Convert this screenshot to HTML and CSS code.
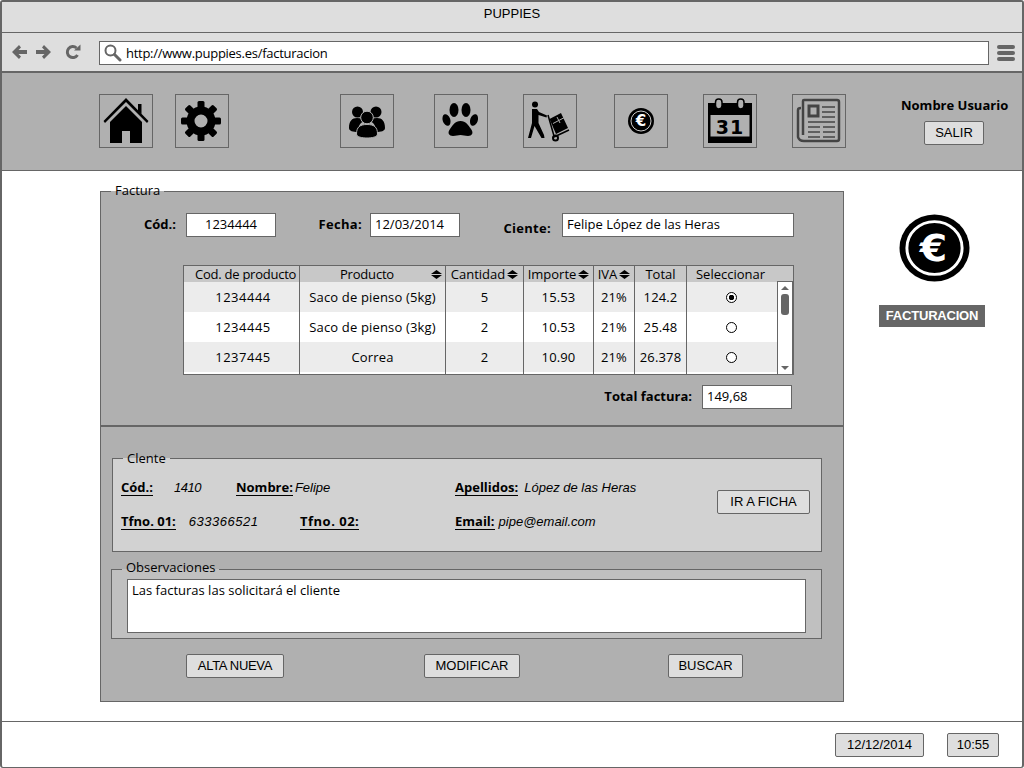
FILE: index.html
```html
<!DOCTYPE html>
<html>
<head>
    <title>Puppies - Facturacion</title>
    <link rel="stylesheet" href="styles.css">
</head>
<body>

<div class="window">
    <div class="titlebar">PUPPIES</div>

    <div class="navbar">
        <svg class="nav-icon nav-back" width="16" height="16" viewBox="0 0 16 16"><path d="M8 1 L1 8 L8 15 L10 12.5 L7.5 10 H16 V6 H7.5 L10 3.5 Z" fill="#666"/></svg>
        <svg class="nav-icon nav-forward" width="16" height="16" viewBox="0 0 16 16"><path d="M8 1 L15 8 L8 15 L6 12.5 L8.500 10 H0 V6 H8.500 L6 3.500 Z" fill="#666"/></svg>
        <svg class="nav-icon nav-reload" width="16" height="16" viewBox="0 0 16 16"><path d="M12.500 11 A5.500 5.500 0 1 1 11.500 4" fill="none" stroke="#666" stroke-width="3"/><path d="M9 6.500 H15.500 V0.500 Z" fill="#666"/></svg>
        <div class="urlbar">
            <svg class="search-icon" width="18" height="18" viewBox="0 0 18 18"><circle cx="6.500" cy="6.500" r="5" fill="none" stroke="#666" stroke-width="2"/><path d="M10.500 10.500 L16 16" stroke="#666" stroke-width="3" stroke-linecap="round"/></svg>
            http://www.puppies.es/facturacion
        </div>
        <div class="burger"><span></span><span></span><span></span></div>
    </div>

    <div class="header">
        <div class="icon-box box-home">
            <svg width="52" height="52" viewBox="1 1 52 52">
                <path d="M27 4 L49.500 27 L48 29 L27 8 L6 29 L4.500 27 Z"/>
                <path d="M39 10 H42.500 V20 L39 17 Z"/>
                <path d="M27 12 L43 28 V49 H31 V37 H23 V49 H11 V28 Z"/>
            </svg>
        </div>
        <div class="icon-box box-gear">
            <svg width="52" height="52" viewBox="1 1 52 52">
                <circle cx="26" cy="27" r="10.500" fill="none" stroke="#000" stroke-width="8"/>
                <g>
                    <rect x="22.500" y="7" width="7" height="7" rx="1.500"/>
                    <rect x="22.500" y="7" width="7" height="7" rx="1.500" transform="rotate(45 26 27)"/>
                    <rect x="22.500" y="7" width="7" height="7" rx="1.500" transform="rotate(90 26 27)"/>
                    <rect x="22.500" y="7" width="7" height="7" rx="1.500" transform="rotate(135 26 27)"/>
                    <rect x="22.500" y="7" width="7" height="7" rx="1.500" transform="rotate(180 26 27)"/>
                    <rect x="22.500" y="7" width="7" height="7" rx="1.500" transform="rotate(225 26 27)"/>
                    <rect x="22.500" y="7" width="7" height="7" rx="1.500" transform="rotate(270 26 27)"/>
                    <rect x="22.500" y="7" width="7" height="7" rx="1.500" transform="rotate(315 26 27)"/>
                </g>
            </svg>
        </div>
        <div class="icon-box box-group">
            <svg width="52" height="52" viewBox="1 1 52 52">
                <circle cx="17.500" cy="18" r="5.500"/>
                <circle cx="36" cy="18" r="5.500"/>
                <path d="M9 34 C9 27 12 24 17 24 C21 24 23 25 24 27 C20 29 18 32 18 38 C13 38 9 37 9 34 Z"/>
                <path d="M45 34 C45 27 42 24 37 24 C33 24 31 25 30 27 C34 29 36 32 36 38 C41 38 45 37 45 34 Z"/>
                <circle cx="27" cy="23.500" r="6.300" stroke="#b0b0b0" stroke-width="1"/>
                <path d="M16.500 40 C16.500 33 20 30.500 27 30.500 C34 30.500 37.500 33 37.500 40 C37.500 43 32 44 27 44 C22 44 16.500 43 16.500 40 Z" stroke="#b0b0b0" stroke-width="1"/>
            </svg>
        </div>
        <div class="icon-box box-paw">
            <svg width="52" height="52" viewBox="1 1 52 52">
                <ellipse cx="20" cy="16" rx="4.500" ry="7"/>
                <ellipse cx="32" cy="16" rx="4.500" ry="7"/>
                <ellipse cx="12.500" cy="26" rx="3.800" ry="6" transform="rotate(-18 12.500 26)"/>
                <ellipse cx="40" cy="26" rx="3.800" ry="6" transform="rotate(18 40 26)"/>
                <path d="M26.500 27 C32 27 34 31 37 35 C40 39 38 42 34 42 C31 42 29 41 26.500 41 C24 41 22 42 19 42 C15 42 13 39 16 35 C19 31 21 27 26.500 27 Z"/>
            </svg>
        </div>
        <div class="icon-box box-carrier">
            <svg width="52" height="52" viewBox="1 1 52 52">
                <circle cx="12" cy="10.500" r="3"/>
                <path d="M9 15 H14 L16 18 L24 21.500 L23.500 23.500 L15.500 21 V29 L21 41 L21.500 44 H18.500 L11.500 32 L8 44 H5 L9 29 Z"/>
                <path d="M25 21 L31 42" stroke="#000" stroke-width="1.500"/>
                <path d="M31 43 L46 36" stroke="#000" stroke-width="1.500"/>
                <circle cx="32.500" cy="44" r="2.500" fill="none" stroke="#000" stroke-width="2"/>
                <path d="M26.500 25 L38 19 L45 34 L33 40 Z"/>
                <path d="M30 29.500 L41.500 23.500 M34 23 L37 29" stroke="#b0b0b0" stroke-width="1"/>
            </svg>
        </div>
        <div class="icon-box box-coin">
            <svg width="52" height="52" viewBox="1 1 52 52">
                <circle cx="27" cy="27" r="13"/>
                <circle cx="27" cy="27" r="10" fill="none" stroke="#ccc" stroke-width="1"/>
                <text x="27" y="32" text-anchor="middle" class="euro-small">€</text>
            </svg>
        </div>
        <div class="icon-box box-calendar">
            <svg width="52" height="52" viewBox="1 1 52 52">
                <path d="M5 9 H49 V49 H5 Z"/>
                <rect x="7.500" y="21" width="39" height="21.500" fill="#b0b0b0"/>
                <rect x="12.500" y="5" width="6.500" height="10" rx="3.200" fill="#b0b0b0" stroke="#000" stroke-width="1.500"/>
                <rect x="34.500" y="5" width="6.500" height="10" rx="3.200" fill="#b0b0b0" stroke="#000" stroke-width="1.500"/>
                <text x="27" y="39.500" text-anchor="middle" class="cal-day">31</text>
            </svg>
        </div>
        <div class="icon-box box-news">
            <svg width="52" height="52" viewBox="1 1 52 52" fill="none" stroke="#444">
                <path d="M11 7 Q11 6 12 6 H45 Q47 6 47 8 V45 Q47 47 45 47 H12 Q7 47 6 43 V16 Q6 14 9 14" stroke-width="2.500"/>
                <path d="M11 7 V41" stroke-width="2.500"/>
                <rect x="17" y="12" width="9" height="10" stroke-width="3"/>
                <path d="M30 13 H43 M30 18 H43 M30 23 H43 M16 28 H43 M16 33 H28 M31 33 H43 M16 38 H28 M31 38 H43 M16 43 H28 M31 43 H43" stroke-width="1.300"/>
            </svg>
        </div>
        <div class="user">
            <div class="user-name">Nombre Usuario</div>
            <div class="btn btn-salir">SALIR</div>
        </div>
    </div>

    <div class="main">
        <fieldset class="factura">
            <legend>Factura</legend>

            <div class="factura-data">
                <div class="top-row">
                    <label class="lbl lbl-cod">Cód.:</label>
                    <div class="field field-cod">1234444</div>
                    <label class="lbl lbl-fecha">Fecha:</label>
                    <div class="field field-fecha">12/03/2014</div>
                    <label class="lbl lbl-cliente">Ciente:</label>
                    <div class="field field-cliente">Felipe López de las Heras</div>
                </div>

                <div class="table-wrap">
                    <table class="lines">
                        <thead>
                            <tr>
                                <th class="col-cod">Cod. de producto</th>
                                <th class="col-prod th-producto">Producto<svg class="sort sort-far" width="11" height="9" viewBox="0 0 10 9" preserveAspectRatio="none"><path d="M5 0 L10 4 H0 Z M0 5 H10 L5 9 Z"/></svg></th>
                                <th class="col-cant">Cantidad<svg class="sort" width="11" height="9" viewBox="0 0 10 9" preserveAspectRatio="none"><path d="M5 0 L10 4 H0 Z M0 5 H10 L5 9 Z"/></svg></th>
                                <th class="col-imp">Importe<svg class="sort" width="11" height="9" viewBox="0 0 10 9" preserveAspectRatio="none"><path d="M5 0 L10 4 H0 Z M0 5 H10 L5 9 Z"/></svg></th>
                                <th class="col-iva">IVA<svg class="sort" width="11" height="9" viewBox="0 0 10 9" preserveAspectRatio="none"><path d="M5 0 L10 4 H0 Z M0 5 H10 L5 9 Z"/></svg></th>
                                <th class="col-total">Total</th>
                                <th class="col-sel">Seleccionar</th>
                            </tr>
                        </thead>
                        <tbody>
                            <tr class="odd">
                                <td class="cell-code">1234444</td>
                                <td>Saco de pienso (5kg)</td>
                                <td>5</td>
                                <td>15.53</td>
                                <td>21%</td>
                                <td>124.2</td>
                                <td class="cell-radio"><span class="radio radio-on"></span></td>
                            </tr>
                            <tr>
                                <td class="cell-code">1234445</td>
                                <td>Saco de pienso (3kg)</td>
                                <td>2</td>
                                <td>10.53</td>
                                <td>21%</td>
                                <td>25.48</td>
                                <td class="cell-radio"><span class="radio"></span></td>
                            </tr>
                            <tr class="odd">
                                <td class="cell-code">1237445</td>
                                <td>Correa</td>
                                <td>2</td>
                                <td>10.90</td>
                                <td>21%</td>
                                <td>26.378</td>
                                <td class="cell-radio"><span class="radio"></span></td>
                            </tr>
                            <tr class="filler">
                                <td></td><td></td><td></td><td></td><td></td><td></td><td></td>
                            </tr>
                        </tbody>
                    </table>
                    <div class="scrollbar">
                        <span class="arrow-up"></span>
                        <span class="thumb"></span>
                        <span class="arrow-down"></span>
                    </div>
                </div>

                <div class="total-row">
                    <label class="lbl">Total factura:</label>
                    <div class="field field-total">149,68</div>
                </div>
            </div>

            <fieldset class="cliente">
                <legend>Clente</legend>
                <div class="cliente-body">
                    <div class="cliente-rows">
                        <div class="data-row">
                            <div class="dato dato-cod"><b>Cód.:</b><i class="val-cod">1410</i></div>
                            <div class="dato dato-nombre"><b>Nombre:</b><i>Felipe</i></div>
                            <div class="dato dato-apellidos"><b>Apellidos:</b><i>López de las Heras</i></div>
                        </div>
                        <div class="data-row">
                            <div class="dato dato-tel1"><b>Tfno. 01:</b><i class="val-tel">633366521</i></div>
                            <div class="dato dato-tel2"><b>Tfno. 02:</b></div>
                            <div class="dato"><b>Email:</b><i>pipe@email.com</i></div>
                        </div>
                    </div>
                    <div class="btn btn-ficha">IR A FICHA</div>
                </div>
            </fieldset>

            <fieldset class="observaciones">
                <legend>Observaciones</legend>
                <div class="obs-text">Las facturas las solicitará el cliente</div>
            </fieldset>

            <div class="actions">
                <div class="btn btn-alta">ALTA NUEVA</div>
                <div class="btn btn-modificar">MODIFICAR</div>
                <div class="btn btn-buscar">BUSCAR</div>
            </div>
        </fieldset>

        <div class="section">
            <svg class="section-icon" width="71" height="68" viewBox="0 0 72 72" preserveAspectRatio="none">
                <circle cx="36" cy="36" r="35.500"/>
                <circle cx="36" cy="36" r="28" fill="none" stroke="#fff" stroke-width="3"/>
                <text x="35" y="50" text-anchor="middle" class="euro-big">€</text>
            </svg>
            <div class="section-name">FACTURACION</div>
        </div>
    </div>

    <div class="footer">
        <div class="btn btn-date">12/12/2014</div>
        <div class="btn btn-time">10:55</div>
    </div>
</div>

</body>
</html>
```

FILE: styles.css
```css
/* Wireframe colours: #666 lines, #b0b0b0 panels, #dedede bars */
* {
    box-sizing: border-box;
}
body {
    margin: 0;
    background: #fff;
    font-family: "Open Sans", "Liberation Sans", sans-serif;
    font-size: 13px;
    color: #000;
}
.window {
    width: 1024px;
    height: 768px;
    display: flex;
    flex-direction: column;
    border: 2px solid #666;
    border-bottom-width: 1px;
    border-radius: 3px;
    overflow: hidden;
}
.titlebar {
    height: 31px;
    flex: none;
    background: #dedede;
    border-bottom: 1px solid #666;
    padding-top: 4px;
    text-align: center;
    font-family: "Liberation Sans", sans-serif;
    line-height: 15px;
}
.navbar {
    height: 40px;
    flex: none;
    display: flex;
    align-items: center;
    background: #dedede;
    border-bottom: 2px solid #666;
    padding-top: 2px;
}
.nav-icon {
    flex: none;
    margin-bottom: 2px;
}
.nav-back {
    margin-left: 9px;
}
.nav-forward {
    margin-left: 9px;
}
.nav-reload {
    margin-left: 13px;
}
.urlbar {
    width: 890px;
    height: 24px;
    margin-left: 18px;
    display: flex;
    align-items: center;
    gap: 4px;
    padding-left: 4px;
    background: #fff;
    border: 1px solid #666;
    letter-spacing: -0.27px;
}
.search-icon {
    flex: none;
}
.burger {
    margin-left: 8px;
    width: 18px;
    display: flex;
    flex-direction: column;
    gap: 2px;
}
.burger span {
    height: 4px;
    background: #666;
    border-radius: 2px;
}
.header {
    height: 98px;
    flex: none;
    display: flex;
    align-items: flex-start;
    padding-top: 21px;
    background: #b0b0b0;
    border-bottom: 1px solid #666;
}
.icon-box {
    width: 54px;
    height: 54px;
    flex: none;
    border: 1px solid #666;
}
.icon-box svg {
    display: block;
}
.box-home { margin-left: 97px; }
.box-gear { margin-left: 22px; }
.box-group { margin-left: 111px; }
.box-paw { margin-left: 40px; }
.box-carrier { margin-left: 35px; }
.box-coin { margin-left: 37px; }
.box-calendar { margin-left: 35px; }
.box-news { margin-left: 35px; }
.euro-small {
    font-family: "DejaVu Sans", sans-serif;
    font-size: 15px;
    font-weight: bold;
    fill: #fff;
}
.euro-big {
    font-family: "DejaVu Sans", sans-serif;
    font-size: 40px;
    font-weight: bold;
    fill: #fff;
}
.cal-day {
    font-family: "DejaVu Sans", sans-serif;
    font-size: 19px;
    font-weight: bold;
    letter-spacing: 1px;
}
.user {
    margin-left: 55px;
    margin-top: 3px;
    width: 107px;
    text-align: center;
}
.user-name {
    font-weight: bold;
    line-height: 16px;
    white-space: nowrap;
}
.btn {
    height: 24px;
    display: flex;
    align-items: center;
    justify-content: center;
    flex: none;
    padding-bottom: 1px;
    background: #dedede;
    border: 1px solid #666;
    border-radius: 2px;
    font-family: "Liberation Sans", sans-serif;
    white-space: nowrap;
}
.btn-salir {
    width: 60px;
    margin: 8px 0 0 23px;
}
.main {
    flex: 1;
    display: flex;
    align-items: flex-start;
    padding: 11px 0 0 98px;
}
fieldset {
    margin: 0;
    padding: 0;
    min-width: 0;
    border: 1px solid #666;
}
legend {
    padding: 0 4px;
    line-height: 16px;
}
.factura {
    width: 744px;
    height: 520px;
    background: #b0b0b0;
}
.factura > legend {
    margin-left: 10px;
    padding-bottom: 2px;
}
.factura-data {
    height: 227px;
    padding-top: 13px;
    border-bottom: 2px solid #666;
}
.top-row {
    display: flex;
    align-items: center;
}
.lbl {
    padding-bottom: 2px;
    font-weight: bold;
    text-align: right;
    white-space: nowrap;
}
.lbl-cod {
    width: 75px;
    margin-right: 10px;
}
.lbl-fecha {
    width: 86px;
    margin-right: 8px;
    letter-spacing: 0.3px;
}
.lbl-cliente {
    width: 91px;
    margin-right: 11px;
    padding: 6px 0 0;
    letter-spacing: 0.3px;
}
.field {
    height: 24px;
    flex: none;
    display: flex;
    align-items: center;
    padding: 0 0 2px 4px;
    background: #fff;
    border: 1px solid #666;
}
.field-cod {
    width: 90px;
    justify-content: center;
    padding-left: 0;
}
.field-fecha {
    width: 90px;
}
.field-cliente {
    width: 232px;
}
.table-wrap {
    position: relative;
    width: 610px;
    margin: 28px 0 0 82px;
}
.lines {
    width: 610px;
    table-layout: fixed;
    border-collapse: collapse;
    border: 1px solid #666;
}
.lines th {
    height: 16px;
    padding: 0;
    background: #c8c8c8;
    font-weight: normal;
    line-height: 16px;
    border-left: 1px solid #666;
    white-space: nowrap;
}
.lines td {
    height: 30px;
    padding: 0;
    text-align: center;
    letter-spacing: 0.15px;
    background: #fff;
    border-left: 1px solid #666;
}
.lines .odd td {
    background: #ececec;
}
.lines .filler td {
    height: 2px;
}
.col-cod { width: 116px; }
.col-prod { width: 146px; }
.col-cant { width: 78px; }
.col-imp { width: 70px; }
.col-iva { width: 41px; }
.col-total { width: 52px; }
.col-sel { width: 107px; }
.lines .col-cod {
    padding-left: 11px;
    text-align: left;
    letter-spacing: -0.25px;
}
.lines .th-producto {
    text-align: left;
    padding-left: 40px;
    letter-spacing: -0.2px;
}
.lines .col-sel {
    padding-right: 19px;
}
.sort {
    margin-left: 2px;
}
.sort-far {
    margin-left: 37px;
}
.lines .cell-code {
    padding-left: 3px;
    letter-spacing: 0.5px;
}
.lines .cell-radio {
    padding-right: 17px;
}
.radio {
    display: inline-block;
    width: 11px;
    height: 11px;
    margin-bottom: 2px;
    vertical-align: middle;
    background: #fff;
    border: 1px solid #000;
    border-radius: 50%;
}
.radio-on {
    background: radial-gradient(circle, #000 0, #000 2.500px, #fff 3px);
}
.scrollbar {
    position: absolute;
    top: 16px;
    right: 0;
    bottom: 0;
    width: 16px;
    display: flex;
    flex-direction: column;
    align-items: center;
    padding: 4px 0;
    background: #fff;
    border: 1px solid #666;
}
.arrow-up,
.arrow-down {
    width: 0;
    height: 0;
    border-left: 4px solid transparent;
    border-right: 4px solid transparent;
}
.arrow-up {
    border-bottom: 4px solid #666;
}
.arrow-down {
    margin-top: auto;
    border-top: 4px solid #666;
}
.thumb {
    width: 8px;
    height: 21px;
    margin-top: 4px;
    background: #666;
    border-radius: 3px;
}
.total-row {
    display: flex;
    align-items: center;
    justify-content: flex-end;
    gap: 10px;
    margin-top: 10px;
    padding-right: 51px;
}
.field-total {
    width: 90px;
}
.cliente {
    width: 710px;
    margin: 23px 0 0 11px;
    background: #d2d2d2;
}
.cliente legend,
.observaciones legend {
    margin-left: 10px;
}
.cliente-body {
    height: 85px;
    display: flex;
    padding-left: 8px;
}
.cliente-rows {
    width: 596px;
    flex: none;
    display: flex;
    flex-direction: column;
    gap: 17px;
    padding-top: 13px;
}
.data-row {
    display: flex;
    line-height: 16px;
}
.dato {
    display: flex;
    gap: 4px;
    white-space: nowrap;
}
.dato b {
    border-bottom: 1px solid #000;
    height: 17px;
}
.dato i {
    padding-top: 1px;
    font-family: "Liberation Sans", sans-serif;
    font-style: italic;
}
.dato-cod { width: 115px; }
.dato-nombre {
    width: 219px;
    gap: 2px;
}
.dato-apellidos { gap: 6px; }
.dato-tel1 { width: 179px; }
.dato-tel2 {
    width: 155px;
    letter-spacing: 0.5px;
}
.val-cod {
    margin-left: 17px;
    letter-spacing: -0.5px;
}
.val-tel {
    margin-left: 9px;
    letter-spacing: 0.5px;
}
.btn-ficha {
    width: 93px;
    margin-top: 24px;
}
.observaciones {
    width: 711px;
    margin: 7px 0 0 10px;
    background: #c0c0c0;
}
.observaciones legend {
    padding-bottom: 4px;
}
.obs-text {
    width: 679px;
    height: 54px;
    margin: 0 0 5px 15px;
    padding: 1px 4px;
    background: #fff;
    border: 1px solid #666;
}
.actions {
    display: flex;
    margin-top: 15px;
    padding-left: 85px;
}
.btn-alta {
    width: 98px;
    letter-spacing: -0.3px;
}
.btn-modificar {
    width: 96px;
    margin-left: 140px;
}
.btn-buscar {
    width: 75px;
    margin-left: 148px;
}
.section {
    width: 106px;
    margin: 32px 0 0 35px;
    display: flex;
    flex-direction: column;
    align-items: center;
}
.section-icon {
    display: block;
    margin-left: 4px;
}
.section-name {
    width: 106px;
    height: 22px;
    margin-top: 23px;
    padding-bottom: 1px;
    display: flex;
    align-items: center;
    justify-content: center;
    background: #666;
    color: #fff;
    font-family: "Liberation Sans", sans-serif;
    font-weight: bold;
    letter-spacing: -0.2px;
}
.footer {
    height: 46px;
    flex: none;
    display: flex;
    align-items: center;
    justify-content: flex-end;
    gap: 23px;
    padding-right: 23px;
    border-top: 1px solid #666;
}
.btn-date { width: 89px; }
.btn-time { width: 52px; }
```
